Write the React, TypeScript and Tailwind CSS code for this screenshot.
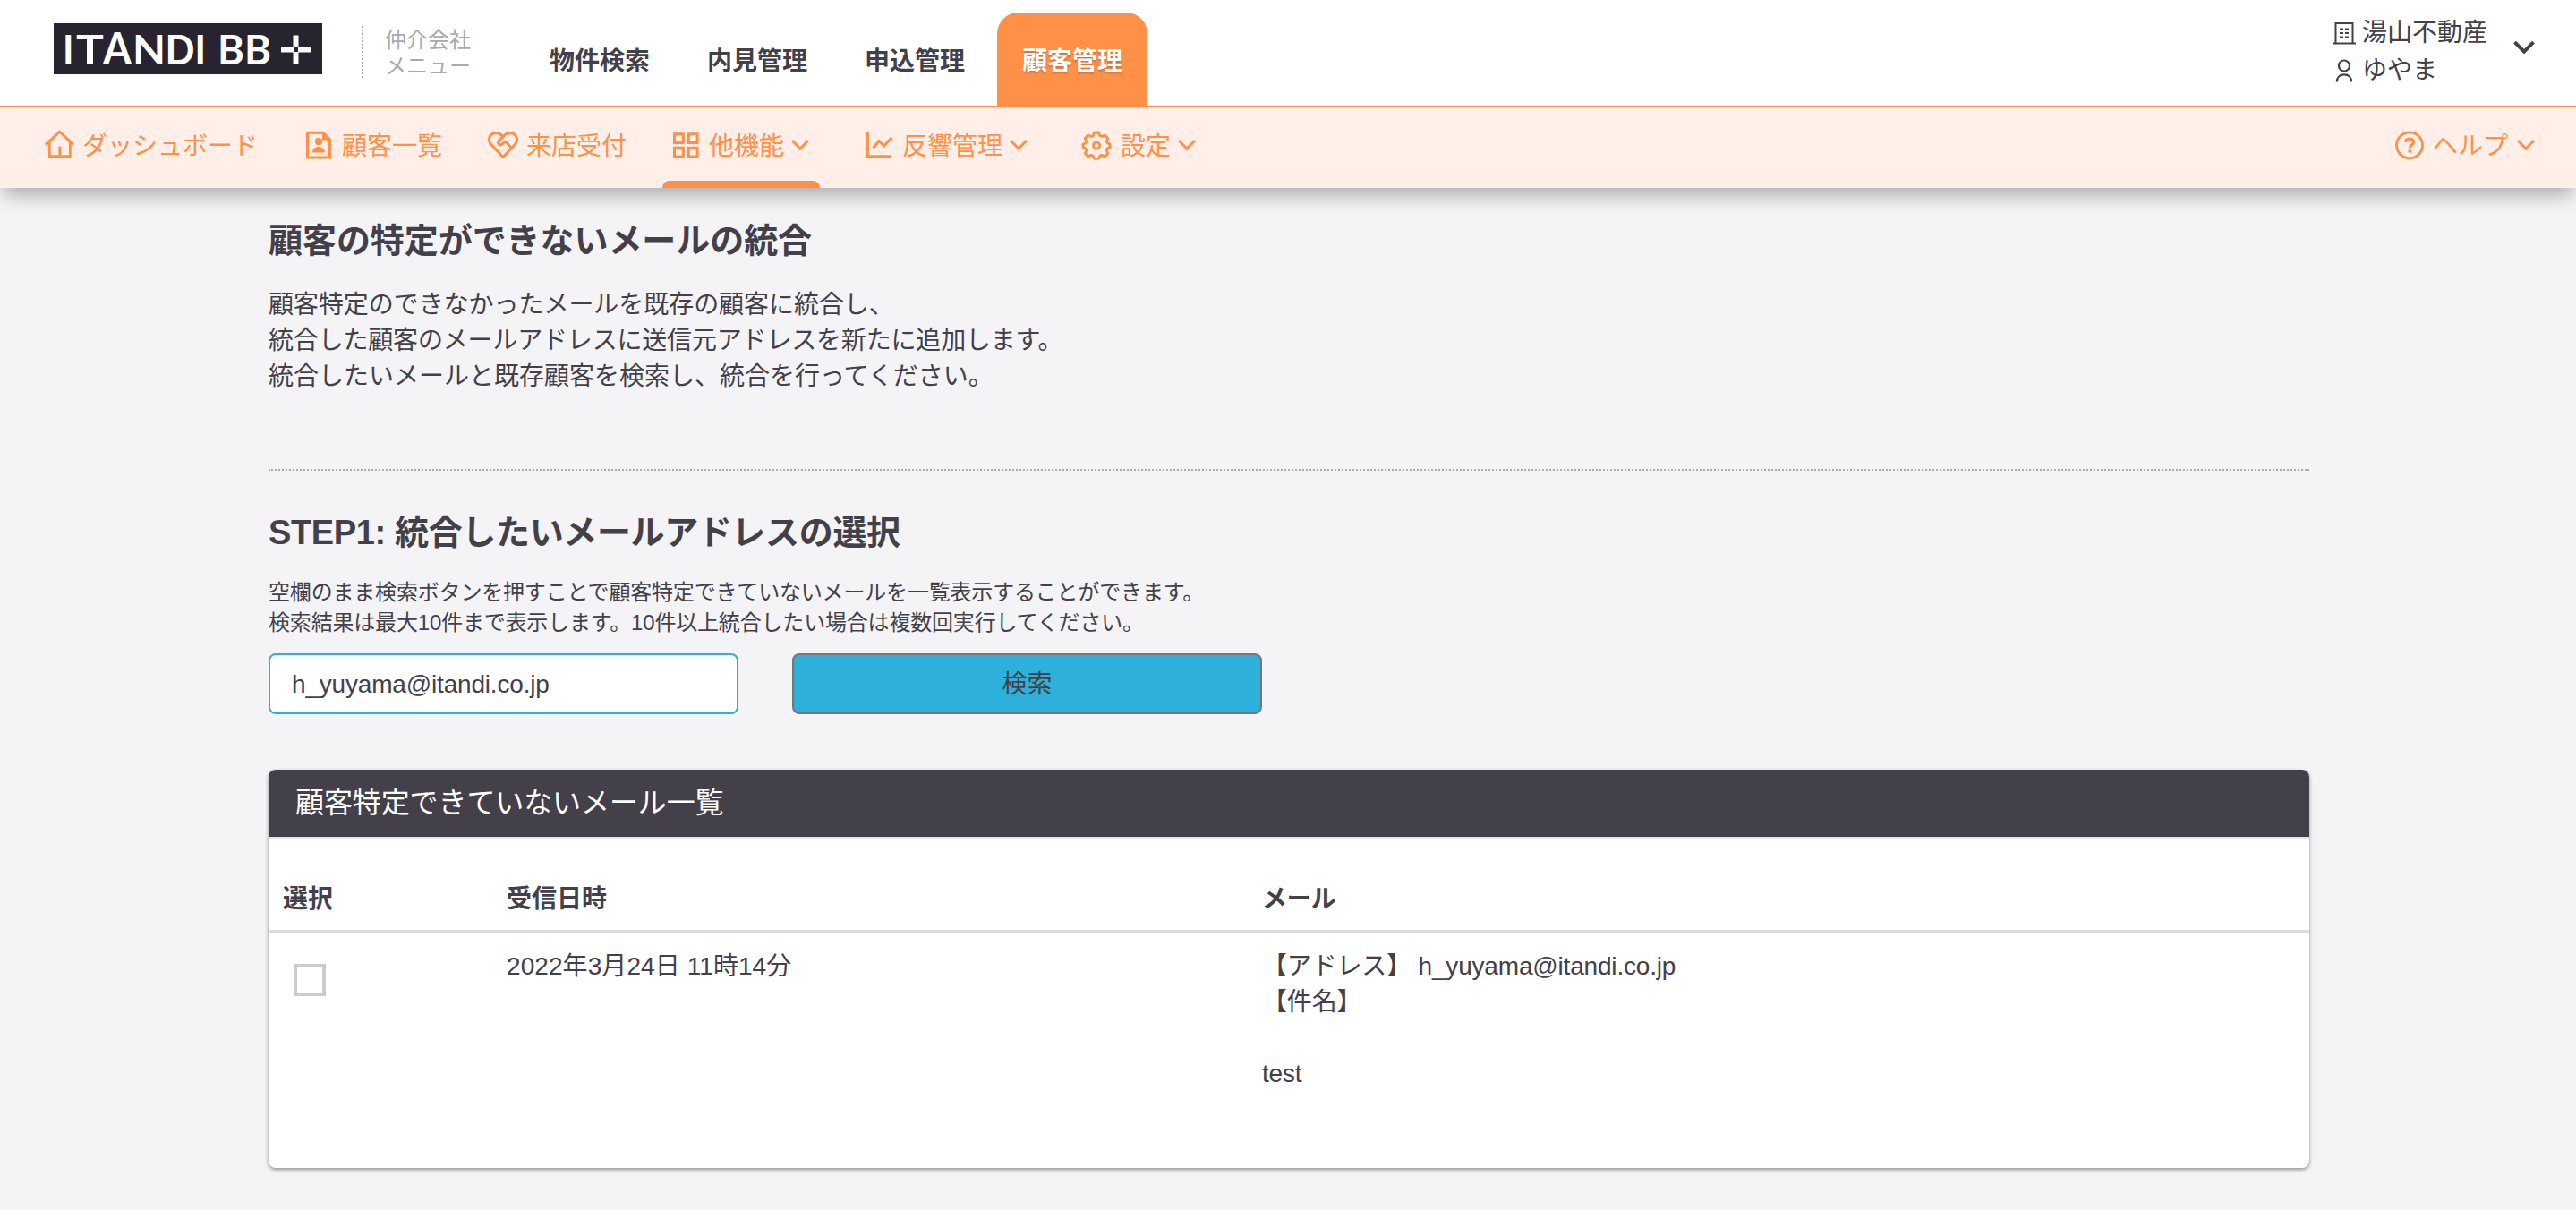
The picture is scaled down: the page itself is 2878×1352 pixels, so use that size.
import React, { useState } from 'react';

const ChevronIcon: React.FC<{ className?: string; strokeWidth?: number }> = ({ className, strokeWidth = 3 }) => (
  <svg viewBox="0 0 24 24" className={className} fill="none" stroke="currentColor" strokeWidth={strokeWidth}>
    <path d="M3 7l9 9 9-9" />
  </svg>
);

const HomeIcon = () => (
  <svg viewBox="0 1 32 32" className="w-8 h-8 overflow-visible" fill="none" stroke="currentColor" strokeWidth="3">
    <path d="M0.8 16.600L16.500 2.200l15.700 14.400" strokeWidth="2.800" />
    <path d="M5.300 14v15.700h23V14M16.800 18.500V29" strokeWidth="2.800" />
  </svg>
);

const CustomerIcon = () => (
  <svg viewBox="0 0 32 32" className="w-8 h-8 overflow-visible" fill="none" stroke="currentColor" strokeWidth="3">
    <path d="M3.500 2.300h17.200l7.800 7.400v20.200h-25z" />
    <path d="M20 1.500v9h9.500z" fill="currentColor" stroke="none" />
    <circle cx="16" cy="12" r="4.200" fill="currentColor" stroke="none" />
    <path d="M9 24.500c0-4.200 3-6.500 7-6.500s7 2.300 7 6.500z" fill="currentColor" stroke="none" />
  </svg>
);

const HeartIcon = () => (
  <svg viewBox="0 0 32 32" className="w-8 h-8 overflow-visible" fill="none" stroke="currentColor" strokeWidth="3" strokeLinejoin="round">
    <path d="M16 29.500L2.600 15.200C-1.800 9.800 1.200 2.800 8 2.600c3.200 0 5.600 1.400 8 3.800 2.400-2.400 4.800-3.800 8-3.800 6.800.2 9.800 7.200 5.400 12.600z" />
    <path d="M16 6.400l-4.600 4.800c-2.400 2.800.8 6 3.600 3.800l3.600-3 6.600 7" />
  </svg>
);

const GridIcon = () => (
  <svg viewBox="0 0 32 32" className="w-8 h-8" fill="none" stroke="currentColor" strokeWidth="3">
    <rect x="3.500" y="3.700" width="9.800" height="9.800" />
    <rect x="19.300" y="3.700" width="9.800" height="9.800" />
    <rect x="3.500" y="19.200" width="9.800" height="9.800" />
    <rect x="19.300" y="19.200" width="9.800" height="9.800" />
  </svg>
);

const ChartIcon = () => (
  <svg viewBox="0 0 32 32" className="w-8 h-8" fill="none" stroke="currentColor" strokeWidth="3">
    <path d="M3.400 2v26.800h27" />
    <path d="M9.500 19.500l6.500-8 5.500 5.500 9-9.500" />
  </svg>
);

const GearIcon = () => (
  <svg viewBox="1 0 32 32" className="w-8 h-8 overflow-visible" fill="none" stroke="currentColor" strokeWidth="2.800" strokeLinejoin="round">
    <path d="M13.500 1.900h5l1.200 3.600 2.200 1 3.500-1.600 3.400 3.500-1.600 3.400.9 2.200 3 1v3.600l-3 1.200-.9 2.200 1.600 3.500-3.400 3.400-3.500-1.500-2.200.9-1.200 2.900h-5l-1.200-2.900-2.200-.9-3.500 1.500-3.400-3.400L4.800 22l-.9-2.200-3-1.200V15l3-1 .9-2.200-1.600-3.400 3.400-3.500 3.500 1.600 2.200-1z" />
    <circle cx="16" cy="16.500" r="3.600" />
  </svg>
);

const HelpIcon = () => (
  <svg viewBox="0 0 32 32" className="w-8 h-8 overflow-visible" fill="none" stroke="currentColor">
    <circle cx="16" cy="16.300" r="14.500" strokeWidth="2.800" />
    <path d="M11.500 13c.2-2.600 2-4 4.600-4s4.600 1.500 4.600 3.800c0 3.200-4.500 3.400-4.500 6.800" strokeWidth="3" />
    <path d="M14.500 21.500h3.400v3h-3.400z" fill="currentColor" stroke="none" />
  </svg>
);

const BuildingIcon = () => (
  <svg viewBox="0 0 26 26" className="w-[26px] h-[26px]" fill="none" stroke="currentColor" strokeWidth="2">
    <path d="M3.500 24V2h19v22" />
    <path d="M0 24.500h26" />
    <path d="M8 8.500h4M14 8.500h4M8 13h4M14 13h4M8 17.500h4M14 17.500h4" />
  </svg>
);

const UserIcon = () => (
  <svg viewBox="0 0 26 26" className="w-[26px] h-[26px]" fill="none" stroke="currentColor" strokeWidth="2.200">
    <circle cx="13" cy="7.500" r="6" />
    <path d="M4.800 25.500c0-5.200 3.400-8.200 8.200-8.200s8.200 3 8.200 8.200" />
  </svg>
);

const logoLetters = [
  { char: 'I', x: 10, width: 12.5 },
  { char: 'T', x: 25, width: 31 },
  { char: 'A', x: 55, width: 32, size: 50 },
  { char: 'N', x: 88, width: 37 },
  { char: 'D', x: 124.5, width: 33 },
  { char: 'I', x: 157.5, width: 12.5 },
  { char: 'B', x: 183, width: 30 },
  { char: 'B', x: 213, width: 30 },
];

const Logo = () => (
  <svg viewBox="0 0 300 57" className="w-[300px] h-[57px] bg-[#27242f] overflow-visible" role="img" aria-label="ITANDI BB+">
    <g fill="#fff" fontFamily="Lato, 'Liberation Sans', sans-serif" fontWeight="700">
      {logoLetters.map((l) => (
        <text key={l.x} x={l.x} y="45.500" fontSize={l.size || 45} textLength={l.width} lengthAdjust="spacingAndGlyphs">
          {l.char}
        </text>
      ))}
    </g>
    <path d="M254 29.500h33M270.500 13.500V45.500" stroke="#fff" strokeWidth="6" />
    <path d="M268 27h5v5h-5z" fill="#27242f" />
  </svg>
);

const mainMenu = ['物件検索', '内見管理', '申込管理', '顧客管理'];

const subMenu = [
  { label: 'ダッシュボード', icon: <HomeIcon />, space: 'mr-8' },
  { label: '顧客一覧', icon: <CustomerIcon />, space: 'mr-8' },
  { label: '来店受付', icon: <HeartIcon />, space: 'mr-[30px]' },
  { label: '他機能', icon: <GridIcon />, space: 'mr-10', dropdown: true, active: true },
  { label: '反響管理', icon: <ChartIcon />, space: 'mr-10', dropdown: true },
  { label: '設定', icon: <GearIcon />, space: '', dropdown: true },
];

const mails = [
  { id: 1, receivedAt: '2022年3月24日 11時14分', address: 'h_yuyama@itandi.co.jp', subject: '', body: 'test' },
];

const Header = () => (
  <header className="h-[120px] flex justify-between bg-white border-b-2 border-[#ff9048]">
    <div className="flex">
      <div className="pl-[60px] pt-[26px]">
        <Logo />
      </div>
      <div className="ml-11 mt-[29px] h-[58px] w-[120px] pl-6 pt-px border-l-2 border-dotted border-[#aaa] text-2xl leading-[29px] text-[#aaa] whitespace-nowrap">
        仲介会社
        <br />
        メニュー
      </div>
      <nav className="ml-[62px] pt-3.5 flex gap-2">
        {mainMenu.map((label) => (
          <a
            key={label}
            className={
              label === '顧客管理'
                ? 'w-[168px] rounded-t-3xl bg-[#ff9048] text-white text-[28px] leading-[109px] h-[104px] font-bold text-center [text-shadow:0_2px_2px_rgba(0,0,0,0.2)]'
                : 'w-[168px] text-[28px] leading-[109px] h-[104px] font-bold text-center'
            }
          >
            {label}
          </a>
        ))}
      </nav>
    </div>
    <div className="flex pt-4 pr-11 text-[28px] leading-[42px]">
      <div className="mr-[27px]">
        <div className="flex items-center gap-[7px] h-[42px]">
          <BuildingIcon />
          湯山不動産
        </div>
        <div className="flex items-center gap-[7px] h-[42px]">
          <UserIcon />
          ゆやま
        </div>
      </div>
      <ChevronIcon className="w-7 h-7 mt-[23px]" strokeWidth={3.4} />
    </div>
  </header>
);

const SubHeader = () => (
  <div className="relative h-[90px] flex justify-between pl-10 pr-[34px] bg-[#ffefe8] text-[#ff9048] text-[28px] shadow-[0_12px_20px_-4px_rgba(0,0,0,0.3)]">
    <nav className="flex">
      {subMenu.map((item) => (
        <a key={item.label} className={`relative flex items-center h-[84px] px-2.5 gap-2.5 whitespace-nowrap ${item.space}`}>
          {item.icon}
          <span className="flex items-center gap-1.5">
            <span className="pt-[3px]">{item.label}</span>
            {item.dropdown && <ChevronIcon className="w-6 h-6" />}
          </span>
          {item.active && <span className="absolute left-0 right-0 -bottom-1.5 h-2 rounded-t-lg bg-[#ff9048]" />}
        </a>
      ))}
    </nav>
    <a className="flex items-center h-[84px] px-2.5 gap-2.5">
      <HelpIcon />
      <span className="flex items-center gap-2">
        <span className="pt-[3px]">ヘルプ</span>
        <ChevronIcon className="w-6 h-6" />
      </span>
    </a>
  </div>
);

const App: React.FC = () => {
  const [email, setEmail] = useState('h_yuyama@itandi.co.jp');
  const [selected, setSelected] = useState<number[]>([]);

  const toggle = (id: number) => {
    setSelected(selected.includes(id) ? selected.filter((s) => s !== id) : [...selected, id]);
  };

  return (
    <div className="min-h-[1352px] bg-[#f4f4f7] text-[#43404a] font-['Liberation_Sans','Noto_Sans_CJK_JP',sans-serif]">
      <Header />
      <SubHeader />
      <main className="ml-[300px] w-[2280px] pt-[31px] text-[28px] leading-10">
        <h1 className="text-[38px] leading-[56px] font-bold tracking-[-0.06px]">顧客の特定ができないメールの統合</h1>
        <p className="mt-6">
          <span className="tracking-[-0.05px]">顧客特定のできなかったメールを既存の顧客に統合し、</span>
          <br />
          <span className="tracking-[-0.18px]">統合した顧客のメールアドレスに送信元アドレスを新たに追加します。</span>
          <br />
          統合したいメールと既存顧客を検索し、統合を行ってください。
        </p>
        <hr className="mt-[83px] border-t-2 border-dotted border-[#aaa]" />

        <h2 className="mt-[41px] text-[38px] leading-[56px] font-bold tracking-[-0.36px]">STEP1: 統合したいメールアドレスの選択</h2>
        <p className="mt-[22px] text-2xl leading-[34px] tracking-[-0.18px]">
          空欄のまま検索ボタンを押すことで顧客特定できていないメールを一覧表示することができます。
          <br />
          検索結果は最大10件まで表示します。10件以上統合したい場合は複数回実行してください。
        </p>
        <div className="mt-[17px] flex gap-[60px]">
          <input
            type="text"
            className="w-[525px] h-[68px] px-6 pt-0.5 bg-white border-2 border-[#2db0da] rounded-lg tracking-[-0.18px] focus:outline-none"
            value={email}
            onChange={(e) => setEmail(e.target.value)}
          />
          <button className="w-[525px] h-[68px] pt-0.5 bg-[#2db0da] border-2 border-[#77747e] rounded-lg cursor-pointer">検索</button>
        </div>

        <section className="mt-[62px] h-[445px] rounded-lg bg-white shadow-[0_2px_4px_rgba(0,0,0,0.4)] overflow-hidden">
          <h3 className="h-[77px] px-[30px] bg-[#43404a] border-b-2 border-[#e4e3e8] text-white text-[32px] leading-[75px] tracking-[-0.1px]">
            顧客特定できていないメール一覧
          </h3>
          <div className="grid grid-cols-[250px_844px_1fr] h-[106px] pt-12 border-b-4 border-[#ddd] font-bold">
            <div className="px-4">選択</div>
            <div className="px-4">受信日時</div>
            <div className="px-4 tracking-[-0.6px]">メール</div>
          </div>
          {mails.map((mail) => (
            <div key={mail.id} className="grid grid-cols-[250px_844px_1fr] pt-[17px]">
              <div className="pl-7 pt-[17px]">
                <input
                  type="checkbox"
                  className="block appearance-none w-9 h-9 border-4 border-[#ccc] bg-white checked:bg-[#2db0da]"
                  checked={selected.includes(mail.id)}
                  onChange={() => toggle(mail.id)}
                />
              </div>
              <div className="px-4 tracking-[0.08px]">{mail.receivedAt}</div>
              <div className="px-4 tracking-[-0.18px]">
                【アドレス】 {mail.address}
                <br />
                【件名】{mail.subject}
                <br />
                <br />
                {mail.body}
              </div>
            </div>
          ))}
        </section>
      </main>
    </div>
  );
};

export default App;
